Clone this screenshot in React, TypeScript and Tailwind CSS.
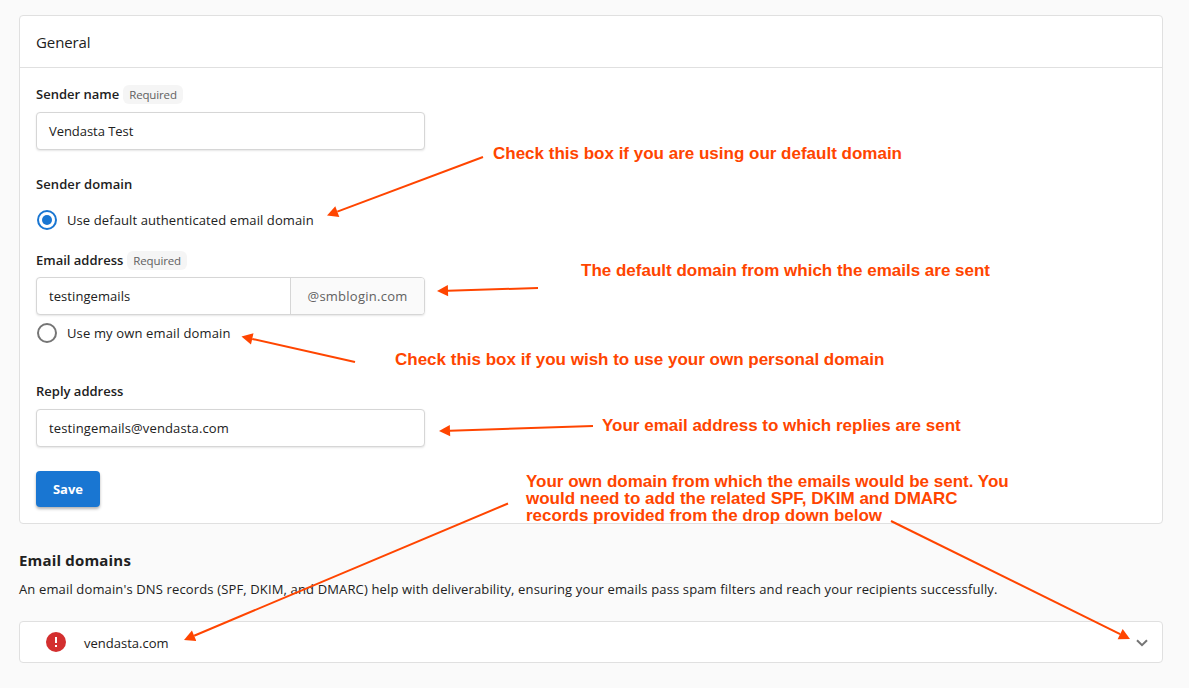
import React from "react";

type Arrow = { from: [number, number]; to: [number, number] };

const arrows: Arrow[] = [
  { from: [483, 157], to: [327, 215.5] },
  { from: [538, 288], to: [437, 291] },
  { from: [355, 362], to: [241.5, 336.5] },
  { from: [593, 426], to: [439, 431] },
  { from: [508, 503.5], to: [184, 640] },
  { from: [891, 521], to: [1130, 639] },
];

function ArrowShape({ from, to }: Arrow) {
  const dx = to[0] - from[0];
  const dy = to[1] - from[1];
  const len = Math.hypot(dx, dy);
  const ux = dx / len;
  const uy = dy / len;
  const bx = to[0] - ux * 11;
  const by = to[1] - uy * 11;
  const half = 5.7;
  return (
    <g>
      <line x1={from[0]} y1={from[1]} x2={bx} y2={by} stroke="#ff4500" strokeWidth="2" />
      <polygon
        fill="#ff4500"
        points={`${to[0]},${to[1]} ${bx - uy * half},${by + ux * half} ${bx + uy * half},${by - ux * half}`}
      />
    </g>
  );
}

function Required() {
  return (
    <span className="flex h-[19px] items-center rounded-[6px] bg-[#f5f5f5] px-[6px] pt-px text-[11.5px] tracking-[-0.14px] text-[#616161]">
      Required
    </span>
  );
}

const field =
  "flex h-[38px] w-[389px] items-center rounded-[4px] border border-[#d6d6d6] bg-white text-[13px] shadow-[0_1px_2px_rgba(0,0,0,0.1)]";

const note =
  "absolute whitespace-nowrap font-['Liberation_Sans',Arial,sans-serif] text-[17px] leading-[17px] font-bold text-[#ff4500]";

export default function App() {
  return (
    <div className="relative h-[688px] w-[1189px] overflow-hidden bg-[#fafafa] pt-[15px] pl-[19px] font-['Open_Sans','Noto_Sans',sans-serif] text-[#212121]">
      <section className="h-[509px] w-[1144px] rounded-[4px] border border-[#e0e0e0] bg-white">
        <header className="flex h-[52px] items-center border-b border-[#e0e0e0] px-4 pt-px text-[15px] tracking-[-0.1px]">
          <span>General</span>
        </header>
        <div className="flex flex-col items-start px-4 pt-[17px]">
          <div className="flex h-[19px] items-center gap-[4px]">
            <span className="text-[13px] font-semibold">Sender name</span>
            <Required />
          </div>
          <div className={`${field} mt-[8px] px-3 pt-[2px]`}>
            <span className="tracking-[-0.05px]">Vendasta Test</span>
          </div>

          <div className="mt-[24px] flex h-5 items-center pt-[2px] text-[13px] font-semibold tracking-[0.08px]">
            <span>Sender domain</span>
          </div>
          <label className="mt-[16px] flex h-5 items-center gap-[10px] pl-px">
            <svg width="20" height="20" viewBox="0 0 20 20">
              <circle cx="10" cy="10" r="9" fill="none" stroke="#1976d2" strokeWidth="2" />
              <circle cx="10" cy="10" r="5" fill="#1976d2" />
            </svg>
            <span className="pt-[2px] text-[13px] tracking-[0.1px]">Use default authenticated email domain</span>
          </label>

          <div className="mt-[21px] flex h-[19px] items-center gap-[4px]">
            <span className="text-[13px] font-semibold">Email address</span>
            <Required />
          </div>
          <div className={`${field} mt-[7px] overflow-hidden`}>
            <span className="flex-1 px-3 pt-[2px] tracking-[0.07px]">testingemails</span>
            <span className="flex h-full w-[134px] items-center justify-center border-l border-[#d6d6d6] bg-[#fafafa] pt-[2px] text-[#616161]">
              <span className="tracking-[0.25px]">@smblogin.com</span>
            </span>
          </div>
          <label className="mt-[8px] flex h-5 items-center gap-[10px] pl-px">
            <svg width="20" height="20" viewBox="0 0 20 20">
              <circle cx="10" cy="10" r="9" fill="none" stroke="#757575" strokeWidth="2" />
            </svg>
            <span className="pt-[2px] text-[13px] tracking-[0.14px]">Use my own email domain</span>
          </label>

          <div className="mt-[38px] flex h-5 items-center pt-[2px] text-[13px] font-semibold">
            <span>Reply address</span>
          </div>
          <div className={`${field} mt-[8px] px-3 pt-[2px]`}>
            <span className="tracking-[0.13px]">testingemails@vendasta.com</span>
          </div>
          <button className="mt-[24px] flex h-[36px] w-[64px] items-center justify-center rounded-[4px] bg-[#1976d2] pt-[2px] text-[13px] font-bold text-white shadow-[0_2px_3px_rgba(0,0,0,0.3)]">
            <span>Save</span>
          </button>
        </div>
      </section>

      <h2 className="mt-[24px] h-[24px] text-[15px] leading-[24px] font-bold tracking-[0.18px]">
        <span>Email domains</span>
      </h2>
      <p className="mt-[7px] h-[20px] text-[13px] leading-[20px] tracking-[0.14px] whitespace-nowrap">
        <span>
          An email domain's DNS records (SPF, DKIM, and DMARC) help with deliverability, ensuring your emails pass spam
          filters and reach your recipients successfully.
        </span>
      </p>
      <div className="mt-[22px] flex h-[42px] w-[1144px] items-center rounded-[4px] border border-[#e0e0e0] bg-white pr-[10px] pl-[26px]">
        <svg width="20" height="20" viewBox="0 0 20 20">
          <circle cx="10" cy="10" r="10" fill="#d32f2f" />
          <path d="M9 5h2v6H9zM9 13h2v2H9z" fill="#fff" />
        </svg>
        <span className="ml-[18px] flex-1 pt-[3px] text-[13px]">vendasta.com</span>
        <svg width="20" height="20" viewBox="0 0 20 20">
          <path d="M5 8.2l5 5 5-5" fill="none" stroke="#757575" strokeWidth="2" />
        </svg>
      </div>

      <svg className="pointer-events-none absolute inset-0" width="1189" height="688" viewBox="0 0 1189 688">
        {arrows.map((a) => (
          <ArrowShape key={a.from.join()} from={a.from} to={a.to} />
        ))}
      </svg>
      <p className={`${note} top-[145px] left-[493px]`}>Check this box if you are using our default domain</p>
      <p className={`${note} top-[262px] left-[581px]`}>The default domain from which the emails are sent</p>
      <p className={`${note} top-[351px] left-[395px]`}>Check this box if you wish to use your own personal domain</p>
      <p className={`${note} top-[417px] left-[602px]`}>Your email address to which replies are sent</p>
      <p className={`${note} top-[473px] left-[526px]`}>
        Your own domain from which the emails would be sent. You
        <br />
        would need to add the related SPF, DKIM and DMARC
        <br />
        records provided from the drop down below
      </p>
    </div>
  );
}
